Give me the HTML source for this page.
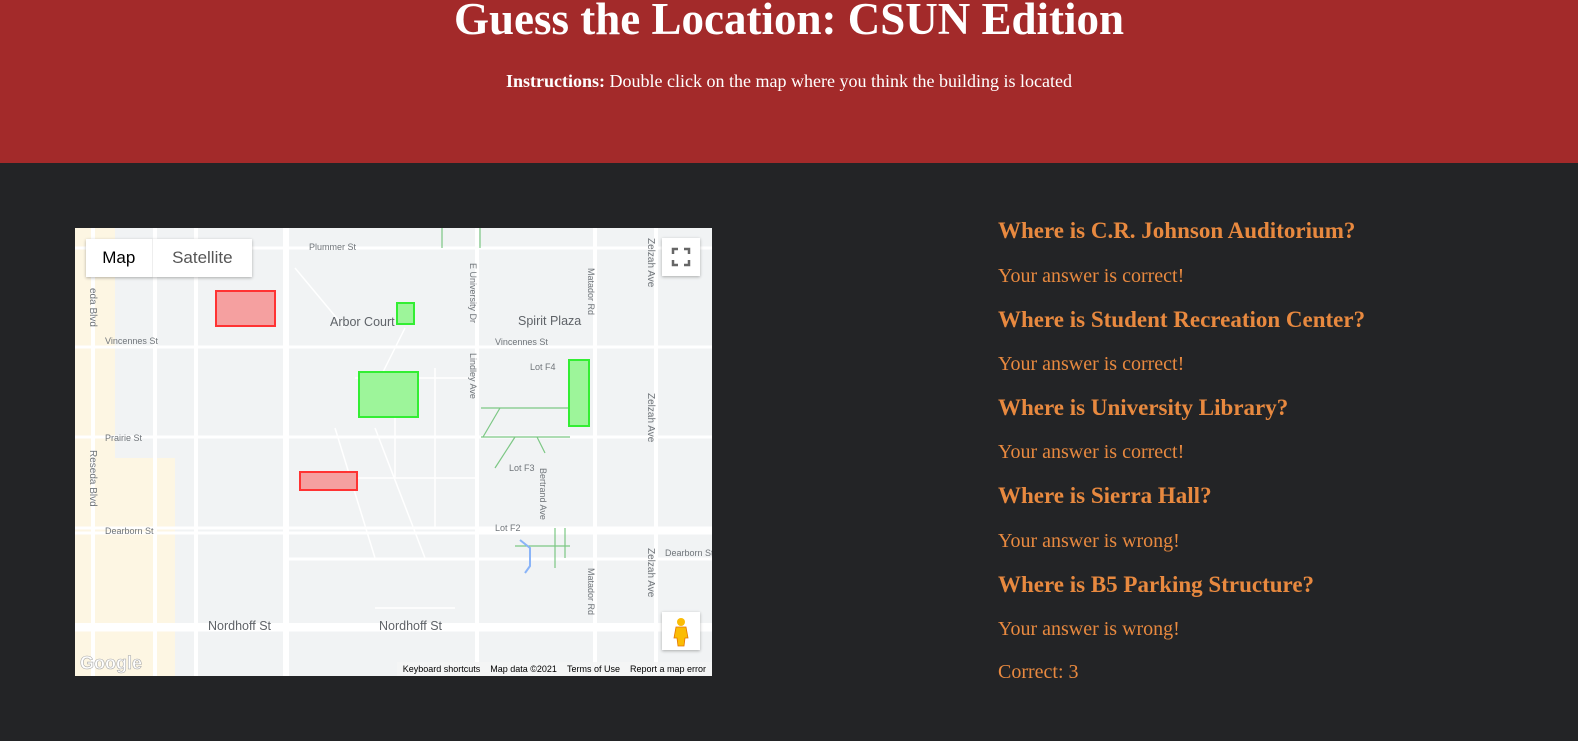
<!DOCTYPE html>
<html><head><meta charset="utf-8"><style>
body{margin:0;background:#232426;width:1578px;height:741px;overflow:hidden;font-family:"Liberation Serif",serif}
header{background:#a32a2a;height:163px;color:#fff;text-align:center;position:relative}
h1{margin:0;position:absolute;top:-7px;left:0;right:0;font-size:45px;font-weight:bold}
.ins{position:absolute;top:71px;left:0;right:0;font-size:18px}
.side{position:absolute;left:998px;top:0;color:#e8893f}
.side h3{position:absolute;margin:0;font-size:23px;white-space:nowrap;left:0}
.side p{position:absolute;margin:0;font-size:20px;white-space:nowrap;left:0}
#map{position:absolute;left:75px;top:228px;width:637px;height:448px;background:#f1f3f4;overflow:hidden}
.ui{font-family:"Liberation Sans",sans-serif}
</style></head><body>
<header><h1>Guess the Location: CSUN Edition</h1><div class="ins"><b>Instructions:</b> Double click on the map where you think the building is located</div></header>
<div id="map">
<svg width="637" height="448" style="position:absolute;left:0;top:0" font-family="Liberation Sans,sans-serif">
<rect x="0" y="0" width="40" height="448" fill="#fdf6e3"/>
<rect x="0" y="230" width="100" height="218" fill="#fdf6e3"/>
<g stroke="#fff" fill="none">
<path d="M18 0V448M121 0V448M80 0V448M402 0V448M520 0V448M581 0V448" stroke-width="4"/>
<path d="M211 0V448" stroke-width="6"/>
<path d="M0 20H640M0 119H640M0 209H640M0 305H640M0 402H640M0 300H640M400 303H640M210 331H640" stroke-width="3"/>
<path d="M0 398H637" stroke-width="6"/>
<path d="M220 40L270 100M300 160L330 100M280 150H400M240 250H400M300 200L350 330M260 300H340M320 150V250M360 140V300M300 380H380M260 200L300 330" stroke-width="1.5"/>
</g>
<g stroke="#7cc784" fill="none" stroke-width="1.2"><path d="M406 180H495M406 209H495M425 180L408 209M440 209L420 240M462 209L470 225"/><path d="M367 0V20M405 0V20"/><path d="M440 318H495M480 300V340M490 300V330"/></g>
<path d="M445 312L455 320V338L450 345" stroke="#8ab4f8" stroke-width="2" fill="none"/>
<g fill="#70757a" font-size="9"><text x="234" y="22">Plummer St</text><text x="30" y="116">Vincennes St</text><text x="420" y="117">Vincennes St</text><text x="30" y="213">Prairie St</text><text x="30" y="306">Dearborn St</text><text x="455" y="142">Lot F4</text><text x="434" y="243">Lot F3</text><text x="420" y="303">Lot F2</text><text x="590" y="328">Dearborn St</text></g>
<g fill="#5f6368" font-size="12.5"><text x="255" y="98">Arbor Court</text><text x="443" y="97">Spirit Plaza</text><text x="133" y="402">Nordhoff St</text><text x="304" y="402">Nordhoff St</text></g>
<g fill="#70757a" font-size="10"><text transform="translate(15,60) rotate(90)">eda Blvd</text><text transform="translate(15,222) rotate(90)">Reseda Blvd</text><text transform="translate(573,10) rotate(90)">Zelzah Ave</text><text transform="translate(573,165) rotate(90)">Zelzah Ave</text><text transform="translate(573,320) rotate(90)">Zelzah Ave</text></g>
<g fill="#70757a" font-size="9"><text transform="translate(395,35) rotate(90)">E University Dr</text><text transform="translate(395,125) rotate(90)">Lindley Ave</text><text transform="translate(513,40) rotate(90)">Matador Rd</text><text transform="translate(513,340) rotate(90)">Matador Rd</text><text transform="translate(465,240) rotate(90)">Bertrand Ave</text></g>
<rect x="141" y="63" width="59" height="35" fill="#f5a0a0" stroke="#ff3333" stroke-width="2"/>
<rect x="225" y="244" width="57" height="18" fill="#f5a0a0" stroke="#ff3333" stroke-width="2"/>
<rect x="322" y="75" width="17" height="21" fill="#9df59a" stroke="#33ee33" stroke-width="2"/>
<rect x="284" y="144" width="59" height="45" fill="#9df59a" stroke="#33ee33" stroke-width="2"/>
<rect x="494" y="132" width="20" height="66" fill="#9df59a" stroke="#33ee33" stroke-width="2"/>
<text x="5" y="441" font-size="18" font-weight="bold" fill="#fff" stroke="#aaa" stroke-width=".6">Google</text>
</svg>
<div class="ui" style="position:absolute;left:11px;top:11px;height:38px;width:166px;background:#fff;box-shadow:0 1px 3px rgba(0,0,0,.3);font-size:17px;display:flex"><div style="width:66px;line-height:38px;text-align:center;color:#000">Map</div><div style="width:100px;line-height:38px;text-align:center;color:#565656;border-left:1px solid #eee">Satellite</div></div>
<div style="position:absolute;left:587px;top:10px;width:38px;height:38px;background:#fff;box-shadow:0 1px 3px rgba(0,0,0,.3)"><svg width="38" height="38"><path d="M11 16V11H16M22 11H27V16M27 22V27H22M16 27H11V22" stroke="#666" stroke-width="2.5" fill="none"/></svg></div>
<div style="position:absolute;left:587px;top:384px;width:38px;height:38px;background:#fff;box-shadow:0 1px 3px rgba(0,0,0,.3)"><svg width="38" height="38"><circle cx="19" cy="10" r="4" fill="#fbbc04"/><path d="M14 15H24L26 26H23L22 34H16L15 26H12Z" fill="#fbbc04" stroke="#e37400" stroke-width=".8"/></svg></div>
<div class="ui" style="position:absolute;right:0;bottom:0;height:14px;background:rgba(245,245,245,.8);font-size:9px;color:#000;line-height:14px;padding:0 6px;white-space:nowrap;word-spacing:0">Keyboard shortcuts&nbsp;&nbsp;&nbsp;&nbsp;Map data ©2021&nbsp;&nbsp;&nbsp;&nbsp;Terms of Use&nbsp;&nbsp;&nbsp;&nbsp;Report a map error</div>
</div>
<div class="side">
<h3 style="top:218px">Where is C.R. Johnson Auditorium?</h3><p style="top:265px">Your answer is correct!</p>
<h3 style="top:307px">Where is Student Recreation Center?</h3><p style="top:353px">Your answer is correct!</p>
<h3 style="top:395px">Where is University Library?</h3><p style="top:441px">Your answer is correct!</p>
<h3 style="top:483px">Where is Sierra Hall?</h3><p style="top:530px">Your answer is wrong!</p>
<h3 style="top:572px">Where is B5 Parking Structure?</h3><p style="top:618px">Your answer is wrong!</p>
<p style="top:661px">Correct: 3</p>
</div>
</body></html>
